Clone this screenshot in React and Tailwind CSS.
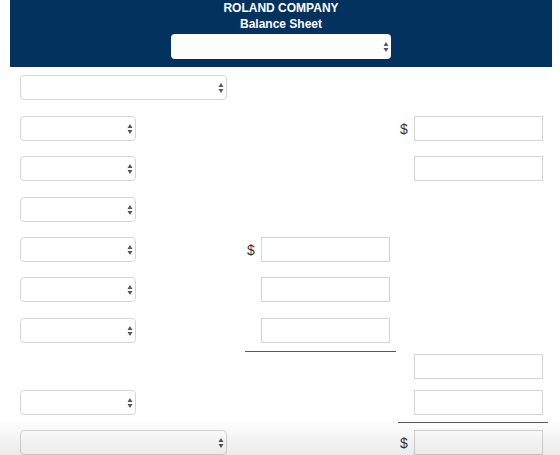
import React from 'react';

const Arrows = () => (
  <svg width="6" height="11" viewBox="0 0 6 11" className="absolute right-[2px] top-1/2 -translate-y-1/2">
    <path d="M3 0.5 L5.5 4.5 L0.5 4.5 Z" fill="#555" />
    <path d="M0.5 6.5 L5.5 6.5 L3 10.5 Z" fill="#555" />
  </svg>
);

const Select = ({ wide }) => (
  <div
    className={`relative h-[25px] rounded-[4px] border border-[#d6d6d6] bg-white ${wide ? 'w-[207px]' : 'w-[116px]'}`}
  >
    <Arrows />
  </div>
);

const Box = () => <div className="h-[25px] w-[129px] border border-[#d4d4d4] bg-white" />;

const Dollar = ({ show }) => (
  <span className="ml-[2px] w-[14px] text-[14px] leading-none text-[#333]">{show ? '$' : ''}</span>
);

const Row = ({ mt, left, mid, right }) => (
  <div className={`flex h-[25px] items-center pl-[20px] ${mt}`}>
    <div className="w-[225px]">{left && <Select wide={left === 'wide'} />}</div>
    <div className="flex w-[153px] items-center">
      {mid && (
        <>
          <Dollar show={mid === '$'} />
          <Box />
        </>
      )}
    </div>
    <div className="flex w-[150px] items-center">
      {right && (
        <>
          <Dollar show={right === '$'} />
          <Box />
        </>
      )}
    </div>
  </div>
);

export default function App() {
  return (
    <div className="relative h-[455px] w-[560px] overflow-hidden bg-white font-['Liberation_Sans',Arial,sans-serif]">
      <div className="ml-[10px] flex h-[67px] w-[542px] flex-col items-center bg-[#03325f] text-[12px] font-bold leading-[16px] text-white">
        <div>ROLAND COMPANY</div>
        <div>Balance Sheet</div>
        <div className="relative mt-[2px] h-[25px] w-[220px] rounded-[4px] bg-white">
          <Arrows />
        </div>
      </div>

      <Row mt="mt-[8px]" left="wide" />
      <Row mt="mt-[16px]" left="narrow" right="$" />
      <Row mt="mt-[15px]" left="narrow" right="box" />
      <Row mt="mt-[16px]" left="narrow" />
      <Row mt="mt-[15px]" left="narrow" mid="$" />
      <Row mt="mt-[15px]" left="narrow" mid="box" />
      <Row mt="mt-[16px]" left="narrow" mid="box" />

      <div className="mt-[8px] flex">
        <div className="ml-[245px] w-[151px] border-t border-[#5a5a5a]" />
      </div>

      <Row mt="mt-[2px]" right="box" />
      <Row mt="mt-[11px]" left="narrow" right="box" />

      <div className="mt-[7px] flex">
        <div className="ml-[398px] w-[150px] border-t border-[#5a5a5a]" />
      </div>

      <Row mt="mt-[7px]" left="wide" right="$" />

      <div className="pointer-events-none absolute bottom-0 left-0 h-[36px] w-full bg-gradient-to-b from-transparent to-black/[0.08]" />
    </div>
  );
}
